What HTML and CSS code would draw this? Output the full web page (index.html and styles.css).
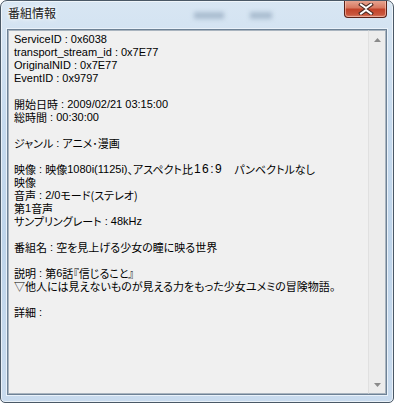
FILE: index.html
```html
<!DOCTYPE html>
<html lang="ja">
<head>
    <meta charset="UTF-8">
    <title>番組情報</title>
    <link rel="stylesheet" href="styles.css">
</head>
<body>
    <div class="window">
        <div class="titlebar">
            <div class="title">番組情報</div>
            <div class="ghost-buttons">
                <span class="ghost ghost-wide"></span>
                <span class="ghost"></span>
            </div>
            <div class="close">
                <svg width="16" height="12" viewBox="0 0 16 12">
                    <path d="M3 1.5 L8 5 L13 1.5 M3 10.5 L8 7 L13 10.5" fill="none" stroke="#4a2a24" stroke-width="4" stroke-linecap="square"/>
                    <path d="M3 1.5 L8 5 L13 1.5 M3 10.5 L8 7 L13 10.5" fill="none" stroke="#ffffff" stroke-width="2" stroke-linecap="square"/>
                </svg>
            </div>
        </div>
        <div class="client">
            <div class="edit">
                <div class="text">
                    <div class="line">ServiceID : 0x6038</div>
                    <div class="line">transport_stream_id : 0x7E77</div>
                    <div class="line">OriginalNID : 0x7E77</div>
                    <div class="line">EventID : 0x9797</div>
                    <div class="line"></div>
                    <div class="line"><span class="ja">開始日時</span> : 2009/02/21 03:15:00</div>
                    <div class="line"><span class="ja">総時間</span> : 00:30:00</div>
                    <div class="line"></div>
                    <div class="line"><span class="ja">ジャンル</span> : <span class="ja">アニメ･漫画</span></div>
                    <div class="line"></div>
                    <div class="line"><span class="ja">映像</span> : <span class="ja">映像</span>1080i(1125i)<span class="ja">、アスペクト比</span><span class="wide">16:9</span><span class="ja">　パンベクトルなし</span></div>
                    <div class="line"><span class="ja">映像</span></div>
                    <div class="line"><span class="ja">音声</span> : 2/0<span class="ja">モード(ステレオ)</span></div>
                    <div class="line"><span class="ja">第</span>1<span class="ja">音声</span></div>
                    <div class="line"><span class="ja">サンプリングレート</span> : 48kHz</div>
                    <div class="line"></div>
                    <div class="line"><span class="ja">番組名</span> : <span class="ja">空を見上げる少女の瞳に映る世界</span></div>
                    <div class="line"></div>
                    <div class="line"><span class="ja">説明</span> : <span class="ja">第</span>6<span class="ja">話『信じること』</span></div>
                    <div class="line"><span class="ja">▽他人には見えないものが見える力をもった少女ユメミの冒険物語。</span></div>
                    <div class="line"></div>
                    <div class="line"><span class="ja">詳細</span> :</div>
                </div>
                <div class="scrollbar">
                    <svg width="7" height="4" viewBox="0 0 7 4"><path d="M3.5 0 L7 4 L0 4 Z" fill="#8a8a8a"/></svg>
                    <svg width="7" height="4" viewBox="0 0 7 4"><path d="M0 0 L7 0 L3.5 4 Z" fill="#8a8a8a"/></svg>
                </div>
            </div>
        </div>
    </div>
</body>
</html>
```

FILE: styles.css
```css
* {
    margin: 0;
    box-sizing: border-box;
}

body {
    background: #ffffff;
    width: 394px;
    height: 403px;
    overflow: hidden;
}

.window {
    width: 394px;
    height: 403px;
    display: flex;
    flex-direction: column;
    border: 1px solid #4a5866;
    border-radius: 7px 7px 5px 5px;
    background: linear-gradient(180deg, #d8e6f3 0%, #c6daee 30%, #bed4ea 60%, #c9dbee 100%);
    box-shadow: inset 0 0 0 1px rgba(255, 255, 255, 0.6);
    overflow: hidden;
}

.titlebar {
    height: 28px;
    display: flex;
    align-items: flex-start;
}

.title {
    font-family: "Noto Sans CJK JP", sans-serif;
    font-size: 12px;
    line-height: 14px;
    color: #1a1a1a;
    padding: 5px 0 0 7px;
    text-shadow: 0 0 6px #ffffff, 0 0 3px #ffffff;
}

.ghost-buttons {
    display: flex;
    gap: 26px;
    margin: 11px 72px 0 auto;
}

.ghost {
    width: 22px;
    height: 7px;
    background: #aabdd0;
    filter: blur(2px);
}

.ghost-wide {
    width: 30px;
}

.close {
    width: 43px;
    height: 18px;
    margin-top: -1px;
    margin-right: 6px;
    display: flex;
    align-items: center;
    justify-content: center;
    border: 1px solid #5a2118;
    border-top: none;
    border-radius: 0 0 4px 4px;
    background: linear-gradient(180deg, #e8a996 0%, #d87a62 45%, #c2432a 55%, #c9563c 85%, #d6806a 100%);
    box-shadow: inset 0 0 0 1px rgba(255, 210, 195, 0.55);
}

.client {
    flex: 1;
    padding: 0 6px 7px 6px;
    display: flex;
}

.edit {
    flex: 1;
    display: flex;
    border: 1px solid #6e8296;
    box-shadow: 0 0 0 1px #eaf2fa;
    background: #f0f0f0;
}

.text {
    flex: 1;
    padding: 2px 0 0 5px;
    border: 1px solid #a9b4bf;
    border-right: none;
    font-family: "Liberation Sans", "Noto Sans CJK JP", sans-serif;
    font-size: 11px;
    line-height: 13px;
    color: #000000;
    white-space: nowrap;
}

.line {
    height: 13px;
}

.ja {
    display: inline-block;
    height: 13px;
    vertical-align: top;
    font-family: "Noto Sans CJK JP", sans-serif;
    font-size: 11px;
    line-height: 13px;
    font-feature-settings: "palt";
}

.wide {
    display: inline-block;
    height: 13px;
    vertical-align: top;
    font-size: 12px;
    line-height: 13px;
    letter-spacing: 1.5px;
    padding-left: 1px;
}

.scrollbar {
    width: 18px;
    display: flex;
    flex-direction: column;
    justify-content: space-between;
    align-items: center;
    padding: 7px 0 6px 0;
    background: #ececec;
    border: 1px solid #a9b4bf;
    border-left: 1px solid #e0e0e0;
}
```
